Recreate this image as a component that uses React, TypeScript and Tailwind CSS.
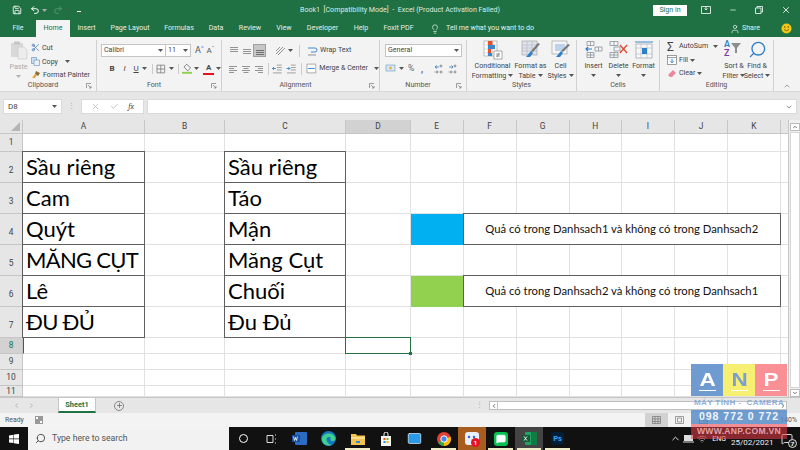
import React from 'react';
import { Save, Undo2, Redo2, Minus, X, Lightbulb, User, Search, Scissors, Check, ChevronUp, ChevronDown, ChevronLeft, ChevronRight, Plus, Mail, MessageSquare, Wifi } from 'lucide-react';

const ui = 'font-["Roboto",sans-serif]';
const calibri = 'font-["Lato","Noto_Sans",sans-serif]';

const Caret = ({ className = '' }: { className?: string }) => (
  <svg width="5" height="3" viewBox="0 0 5 3" className={`shrink-0 ${className}`}><path d="M0 0h5L2.5 3z" fill="#555" /></svg>
);

const Launcher = () => (
  <svg width="6" height="6" viewBox="0 0 6 6" className="shrink-0"><path d="M.5 5V.5H5M2 2l3 3M5 3v2H3" fill="none" stroke="#777" strokeWidth=".7" /></svg>
);

// horizontal text lines used by the alignment buttons
const Lines = ({ rows, color = '#8a8a8a' }: { rows: [number, number, number][]; color?: string }) => (
  <svg width="10" height="10" viewBox="0 0 10 10" className="shrink-0">
    {rows.map(([x, y, w], i) => <rect key={i} x={x} y={y} width={w} height=".9" fill={color} />)}
  </svg>
);

const Group = ({ label, width, launcher, children }: { label: string; width: string; launcher?: boolean; children: React.ReactNode }) => (
  <div className={`${width} flex flex-col shrink-0 border-r border-[#d0d0d0]`}>
    <div className="flex-1 min-h-0">{children}</div>
    <div className={`h-[11px] flex items-center relative text-[7.1px] text-[#555] justify-center ${launcher ? 'pr-[10px]' : ''}`}>
      {label}
      {launcher && <span className="absolute right-[4px] top-[3px]"><Launcher /></span>}
    </div>
  </div>
);

const TableIcon = ({ children }: { children?: React.ReactNode }) => (
  <svg width="20" height="20" viewBox="0 0 20 20" className="shrink-0">{children}</svg>
);

const CondIcon = () => (
  <TableIcon>
    <rect x="1" y="1" width="13" height="15" fill="#fff" stroke="#999" strokeWidth=".6" />
    <path d="M5 1v15M9.5 1v15M1 5h13M1 9h13M1 13h13" stroke="#bbb" strokeWidth=".5" />
    <rect x="5" y="1" width="4.5" height="4" fill="#e8502a" /><rect x="5" y="5" width="7" height="4" fill="#3d87c9" /><rect x="5" y="9" width="3" height="4" fill="#e8502a" /><rect x="5" y="13" width="4" height="3" fill="#3d87c9" />
    <rect x="11" y="11" width="8" height="8" fill="#fff" stroke="#777" strokeWidth=".6" />
    <path d="M13 14h4M13 16h4M16.2 13l-2.4 4" stroke="#555" strokeWidth=".6" />
  </TableIcon>
);
const FormatTableIcon = () => (
  <TableIcon>
    <rect x="1" y="1" width="15" height="14" fill="#dfe3ea" stroke="#999" strokeWidth=".6" />
    <path d="M6 1v14M11 1v14M1 5h15M1 8h15M1 11h15" stroke="#a7adb8" strokeWidth=".5" />
    <path d="M19 4l-7 8-2-1 7-8z" fill="#777" /><path d="M10 11l2 2-3 4H5z" fill="#2f7fc8" />
  </TableIcon>
);
const CellStyleIcon = () => (
  <TableIcon>
    <rect x="1" y="1" width="15" height="13" fill="#f6f6f6" stroke="#999" strokeWidth=".6" />
    <rect x="4" y="4" width="10" height="7" fill="#bcd3ea" />
    <path d="M19 5l-7 7-2-1 7-7z" fill="#777" /><path d="M10 11l2 2-3 4H5z" fill="#2f7fc8" />
  </TableIcon>
);
const InsertIcon = () => (
  <TableIcon>
    <path d="M3 1.5h7v4H3zM3 12.5h7v5H3zM6.5 12.5v5M3 15h7M6.5 1.5v4M11 7h7v4h-7zM14.5 7v4" fill="none" stroke="#7d8894" strokeWidth=".7" />
    <path d="M2 9h6M4 7l-2 2 2 2" fill="none" stroke="#2f7fc8" strokeWidth="1.2" />
  </TableIcon>
);
const DeleteIcon = () => (
  <TableIcon>
    <path d="M1 1.5h8v4H1zM5 1.5v4M1 12.5h8v5H1zM5 12.5v5M1 15h8M5 7h6v4H5z" fill="none" stroke="#7d8894" strokeWidth=".7" />
    <path d="M11 5l7 8M18 5l-7 8" stroke="#e0492c" strokeWidth="1.3" />
  </TableIcon>
);
const FormatIcon = () => (
  <TableIcon>
    <path d="M1 2h18" stroke="#2f7fc8" strokeWidth=".9" />
    <rect x="2" y="4" width="16" height="14" fill="#f8f8f8" stroke="#8b929b" strokeWidth=".6" />
    <path d="M7 4v14M13 4v14M2 8h16M2 14h16" stroke="#a8aeb6" strokeWidth=".5" />
    <rect x="8" y="8" width="5" height="6" fill="#2f7fc8" />
  </TableIcon>
);

const taskbarMark = 'after:content-[""] after:absolute after:bottom-0 after:left-[2px] after:right-[2px] after:h-[2px] after:bg-[#f2edc9]';

const TaskItem = ({ width, marked, bg = '', children }: { width: string; marked?: boolean; bg?: string; children: React.ReactNode }) => (
  <div className={`${width} ${bg} ${marked ? taskbarMark : ''} h-full relative flex items-center justify-center shrink-0`}>{children}</div>
);

const colHeads = ['A', 'B', 'C', 'D', 'E', 'F', 'G', 'H', 'I', 'J', 'K', ''];
const rowHeights = ['1', '2', '3', '4', '5', '6', '7', '8', '9', '10', '11'];
const listA: Record<string, string> = { '2': 'Sầu riêng', '3': 'Cam', '4': 'Quýt', '5': 'MĂNG CỤT', '6': 'Lê', '7': 'ĐU ĐỦ' };
const listC: Record<string, string> = { '2': 'Sầu riêng', '3': 'Táo', '4': 'Mận', '5': 'Măng Cụt', '6': 'Chuối', '7': 'Đu Đủ' };
const tabs = [
  ['File', 'w-[36px]'], ['Home', 'w-[34px]'], ['Insert', 'w-[33px]'], ['Page Layout', 'w-[54px]'], ['Formulas', 'w-[44px]'], ['Data', 'w-[30px]'],
  ['Review', 'w-[38px]'], ['View', 'w-[30px]'], ['Developer', 'w-[47px]'], ['Help', 'w-[30px]'], ['Foxit PDF', 'w-[45px]'],
];

const gridLine = 'border-r border-b border-[#e1e1e1]';
const boxLine = 'border border-[#5f5f5f] -mt-px -ml-px relative z-10';

const Sheet = () => (
  <div className="h-[277px] flex shrink-0 bg-white">
    <div className="w-[788px] grid grid-cols-[23px_122px_80px_121px_65px_52.5px_53px_53px_52.5px_53px_53px_53px_8px] grid-rows-[14px_18px_31px_31px_31px_31px_31px_31px_16px_16px_16px_11px] overflow-hidden">
      <div className="bg-[#e6e6e6] border-r border-b border-[#c6c6c6] flex items-end justify-end pr-[2px] pb-[2px]">
        <svg width="9" height="9" viewBox="0 0 9 9"><path d="M9 0v9H0z" fill="#b5b5b5" /></svg>
      </div>
      {colHeads.map((c, i) => (
        <div key={i} className={`${c === 'D' ? 'bg-[#d2d2d2]' : 'bg-[#e6e6e6]'} border-r border-b border-[#c6c6c6] flex items-center justify-center text-[8.4px] text-[#444] ${ui}`}>{c}</div>
      ))}
      {rowHeights.map((r) => {
        const inTable = !!listA[r];
        const legend = r === '4' || r === '6';
        const caps = r === '5' || r === '7';
        return (
          <React.Fragment key={r}>
            <div className={`${r === '8' ? 'bg-[#d2d2d2] text-[#217346]' : 'bg-[#e6e6e6] text-[#444]'} border-r border-b border-[#c6c6c6] flex items-center justify-center text-[8.4px] ${ui} ${inTable ? 'pt-[6px]' : ''}`}>{r}</div>
            <div className={`${inTable ? boxLine : gridLine} flex items-end pl-[3px] pb-[1px] text-[22px] leading-[28px] text-black whitespace-nowrap overflow-hidden ${calibri} ${caps ? 'tracking-[-0.7px]' : ''} ${r === '8' ? 'border-l-[1.5px] border-l-[#217346]' : ''}`}>{listA[r]}</div>
            <div className={gridLine} />
            <div className={`${inTable ? boxLine : gridLine} flex items-end pl-[3px] pb-[1px] text-[22px] leading-[28px] text-black whitespace-nowrap overflow-hidden ${calibri}`}>{listC[r]}</div>
            <div className={`${gridLine} relative`}>
              {r === '8' && (
                <div className="absolute -left-px -top-px -right-px -bottom-px border-[1.5px] border-[#217346] z-20">
                  <span className="absolute -right-[2px] -bottom-[2px] w-[3px] h-[3px] bg-[#217346]" />
                </div>
              )}
            </div>
            {legend ? (
              <>
                <div className={`${r === '4' ? 'bg-[#00b0f0]' : 'bg-[#92d050]'}`} />
                <div className={`col-span-6 ${boxLine} flex items-center justify-center text-[11.3px] text-[#111] ${calibri}`}>
                  {r === '4' ? 'Quả có trong Danhsach1 và không có trong Danhsach2' : 'Quả có trong Danhsach2 và không có trong Danhsach1'}
                </div>
              </>
            ) : (
              [0, 1, 2, 3, 4, 5, 6].map((i) => <div key={i} className={gridLine} />)
            )}
            <div className="border-b border-[#e1e1e1]" />
          </React.Fragment>
        );
      })}
    </div>
    <div className="w-[12px] bg-[#f0f0f0] border-l border-[#c6c6c6] flex flex-col items-center justify-between pt-[3px]">
      <div className="w-[10px] h-[8px] bg-white border border-[#bbb] flex items-center justify-center"><ChevronUp size={6} strokeWidth={3} color="#444" /></div>
      <div className="w-[10px] flex-1 my-[1px] bg-white border border-[#d5d5d5]" />
      <div className="w-[10px] h-[8px] bg-white border border-[#bbb] flex items-center justify-center"><ChevronDown size={6} strokeWidth={3} color="#444" /></div>
    </div>
  </div>
);

const App: React.FC = () => (
  <div className={`relative w-[800px] h-[450px] overflow-hidden flex flex-col bg-white ${ui}`}>
    {/* Title bar */}
    <div className="h-[20px] bg-[#1f7144] flex items-center text-white shrink-0 relative">
      <div className="flex items-center pl-[12px] gap-[1px] w-[90px]">
        <Save size={10} color="#fff" strokeWidth={2} />
        <Undo2 size={10} color="#fff" strokeWidth={2.4} className="ml-[7px]" />
        <Caret className="invert ml-[1px]" />
        <Redo2 size={10} color="#5d9c7b" strokeWidth={2} className="ml-[5px]" />
        <Caret className="opacity-40 ml-[1px]" />
        <span className="ml-[6px] w-[4px] h-[4px] border-b border-white" />
      </div>
      <div className="absolute left-[300px] top-0 h-full flex items-center text-[7.1px] text-[#dcebe3] whitespace-pre">Book1  [Compatibility Mode]  -  Excel (Product Activation Failed)</div>
      <div className="ml-auto flex items-center pr-[9px]">
        <div className="w-[34px] h-[11px] bg-white text-[#1f7144] text-[7.1px] flex items-center justify-center">Sign in</div>
        <svg width="10" height="8" viewBox="0 0 10 8" className="ml-[14px]"><path d="M.5.5h9v7h-9zM5 .5v3M3.5 2.5L5 4l1.5-1.5" fill="none" stroke="#fff" strokeWidth=".8" /></svg>
        <Minus size={8} color="#fff" className="ml-[18px]" />
        <svg width="8" height="8" viewBox="0 0 8 8" className="ml-[18px]"><path d="M.5 2h5.500v5.500H.5zM2 2V.5h5.500V6H6" fill="none" stroke="#fff" strokeWidth=".8" /></svg>
        <X size={10} color="#fff" className="ml-[18px]" />
      </div>
    </div>

    {/* Tabs */}
    <div className="h-[17px] bg-[#1f7144] flex items-stretch text-[7.1px] text-[#e3efe8] shrink-0">
      {tabs.map(([name, w]) => (
        <div key={name} className={`${w} flex items-center justify-center ${name === 'Home' ? 'bg-[#f3f3f3] text-[#1f7144]' : ''}`}>{name}</div>
      ))}
      <div className="flex items-center ml-[9px] gap-[6px]">
        <Lightbulb size={10} color="#fff" strokeWidth={1.5} />
        <span>Tell me what you want to do</span>
      </div>
      <div className="ml-auto flex items-center pr-[8px]">
        <User size={10} color="#fff" strokeWidth={1.5} />
        <span className="ml-[2px]">Share</span>
        <svg width="11" height="11" viewBox="0 0 11 11" className="ml-[21px]"><circle cx="5.5" cy="5.5" r="5" fill="#f2c811" /><circle cx="3.8" cy="4" r=".7" fill="#5a4700" /><circle cx="7.2" cy="4" r=".7" fill="#5a4700" /><path d="M3 6.5q2.5 2.5 5 0" fill="none" stroke="#5a4700" strokeWidth=".7" /></svg>
      </div>
    </div>

    {/* Ribbon */}
    <div className="h-[54px] bg-[#f3f3f3] flex pt-[3px] text-[7.1px] text-[#444] shrink-0">
      <Group label="Clipboard" width="w-[97px]" launcher>
        <div className="flex">
          <div className="w-[37px] flex flex-col items-center text-[#aaa]">
            <svg width="18" height="20" viewBox="0 0 18 20"><path d="M1 3h12v14H1z" fill="#d8d8d8" /><path d="M4 1.500h6v3H4z" fill="#c4c4c4" /><path d="M8 7h6l3 3v9H8z" fill="#ececec" stroke="#c8c8c8" strokeWidth=".6" /></svg>
            <span className="leading-[10px] mt-[2px]">Paste</span>
            <Caret className="opacity-40 mt-[3px]" />
          </div>
          <div className="flex flex-col pt-[1px] leading-[13.5px] -ml-[6px]">
            <div className="flex items-center gap-[2px] h-[13.5px]"><Scissors size={9} color="#3f78b5" /><span>Cut</span></div>
            <div className="flex items-center gap-[2px] h-[13.5px]">
              <svg width="9" height="9" viewBox="0 0 9 9"><path d="M.5.5h5v6h-5z" fill="#cfe0f2" stroke="#5f8dbd" strokeWidth=".6" /><path d="M3 3h5.500v5.500H3z" fill="#e9f1fa" stroke="#5f8dbd" strokeWidth=".6" /></svg>
              <span>Copy</span><Caret className="ml-[5px]" />
            </div>
            <div className="flex items-center gap-[2px] h-[13.5px] whitespace-nowrap">
              <svg width="10" height="9" viewBox="0 0 10 9"><path d="M5 1l4 2-2 3-3-2z" fill="#8a6d3b" /><path d="M4 4L1 8h3l2-3z" fill="#e8a33c" /></svg>
              <span>Format Painter</span>
            </div>
          </div>
        </div>
      </Group>

      <Group label="Font" width="w-[125px]" launcher>
        <div className="pl-[4px] pt-[4px] flex flex-col gap-[5px]">
          <div className="flex items-center h-[13px]">
            <div className="w-[65px] h-full bg-white border border-[#c4c4c4] flex items-center px-[2px] justify-between"><span>Calibri</span><Caret /></div>
            <div className="w-[25px] h-full bg-white border border-l-0 border-[#c4c4c4] flex items-center px-[2px] justify-between"><span>11</span><Caret /></div>
            <span className="ml-[4px] text-[9px] text-[#555] leading-none">A<sup className="text-[6px] text-[#2f7fc8]">^</sup></span>
            <span className="ml-[3px] text-[8px] text-[#555] leading-none">A<sup className="text-[6px] text-[#2f7fc8]">ˇ</sup></span>
          </div>
          <div className="flex items-center h-[13px] text-[8px] text-[#444]">
            <span className="w-[5px]" />
            <span className="w-[13px] text-center font-bold">B</span>
            <span className="w-[13px] text-center italic">I</span>
            <span className="w-[11px] text-center underline">U</span>
            <Caret className="ml-[1px]" />
            <span className="w-px h-[10px] bg-[#ccc] ml-[5px]" />
            <svg width="10" height="10" viewBox="0 0 10 10" className="ml-[3px]"><path d="M1 1h8v8H1zM5 1v8M1 5h8" fill="none" stroke="#777" strokeWidth=".8" /></svg>
            <Caret className="ml-[3px]" />
            <span className="w-px h-[10px] bg-[#ccc] ml-[4px]" />
            <svg width="11" height="11" viewBox="0 0 11 11" className="ml-[3px]"><path d="M5 1l4 4-3 3-4-4z" fill="none" stroke="#666" strokeWidth=".8" /><rect x="0" y="9" width="11" height="2" fill="#92d050" /></svg>
            <Caret className="ml-[2px]" />
            <span className="relative w-[11px] text-center ml-[4px] leading-[10px] font-semibold border-b-2 border-[#e8121c]">A</span>
            <Caret className="ml-[2px]" />
          </div>
        </div>
      </Group>

      <Group label="Alignment" width="w-[158px]" launcher>
        <div className="pl-[5px] pt-[4px] flex flex-col gap-[5px]">
          <div className="flex items-center h-[13px]">
            <span className="w-[13px] flex justify-center"><Lines rows={[[1, 1, 8], [1, 3, 8], [1, 5, 8]]} /></span>
            <span className="w-[13px] flex justify-center"><Lines rows={[[1, 3, 8], [1, 5, 8], [1, 7, 8]]} /></span>
            <span className="w-[13px] h-[13px] bg-[#c6c6c6] border border-[#a0a0a0] flex justify-center items-center"><Lines rows={[[1, 4, 8], [1, 6, 8], [1, 8, 8]]} color="#666" /></span>
            <svg width="11" height="11" viewBox="0 0 11 11" className="ml-[9px]"><path d="M1 9l7-7M3 10l7-7M1 6l4-4" stroke="#777" strokeWidth=".8" /></svg>
            <Caret className="ml-[2px]" />
            <span className="w-px h-[12px] bg-[#ccc] ml-[6px]" />
            <svg width="11" height="11" viewBox="0 0 11 11" className="ml-[7px]"><path d="M1 3h7a2 2 0 010 4H4" fill="none" stroke="#2f7fc8" strokeWidth=".9" /><path d="M1 10h8" stroke="#888" strokeWidth=".9" /></svg>
            <span className="ml-[2px] whitespace-nowrap">Wrap Text</span>
          </div>
          <div className="flex items-center h-[13px]">
            <span className="w-[13px] flex justify-center"><Lines rows={[[1, 2, 8], [1, 4, 5], [1, 6, 8], [1, 8, 5]]} /></span>
            <span className="w-[13px] flex justify-center"><Lines rows={[[1, 2, 8], [2.5, 4, 5], [1, 6, 8], [2.5, 8, 5]]} /></span>
            <span className="w-[13px] flex justify-center"><Lines rows={[[1, 2, 8], [4, 4, 5], [1, 6, 8], [4, 8, 5]]} /></span>
            <span className="w-px h-[12px] bg-[#ccc] ml-[3px]" />
            <svg width="11" height="10" viewBox="0 0 11 10" className="ml-[3px]"><path d="M5 1h5M5 3.500h5M5 6h5M1 9h9" stroke="#888" strokeWidth=".8" /><path d="M4 4.500H.5M2 3L.5 4.500 2 6" fill="none" stroke="#2f7fc8" strokeWidth=".9" /></svg>
            <svg width="11" height="10" viewBox="0 0 11 10" className="ml-[3px]"><path d="M5 1h5M5 3.500h5M5 6h5M1 9h9" stroke="#888" strokeWidth=".8" /><path d="M.5 4.500H4M2.500 3L4 4.500 2.500 6" fill="none" stroke="#2f7fc8" strokeWidth=".9" /></svg>
            <span className="w-px h-[12px] bg-[#ccc] ml-[4px]" />
            <svg width="11" height="11" viewBox="0 0 11 11" className="ml-[5px]"><path d="M1 1h9v9H1z" fill="#fff" stroke="#888" strokeWidth=".7" /><path d="M2 5.500h7" stroke="#2f7fc8" strokeWidth=".9" /></svg>
            <span className="ml-[2px] whitespace-nowrap">Merge &amp; Center</span>
            <Caret className="ml-[6px]" />
          </div>
        </div>
      </Group>

      <Group label="Number" width="w-[87px]" launcher>
        <div className="pl-[5px] pt-[4px] flex flex-col gap-[5px]">
          <div className="w-[77px] h-[13px] bg-white border border-[#c4c4c4] flex items-center justify-between px-[2px]"><span>General</span><Caret /></div>
          <div className="flex items-center h-[13px] text-[#666]">
            <svg width="11" height="10" viewBox="0 0 11 10"><rect x="1" y="1" width="9" height="6" fill="#d9e7f4" stroke="#6d9ac5" strokeWidth=".6" /><circle cx="5.500" cy="4" r="1.500" fill="#e2b93b" /></svg>
            <Caret className="ml-[3px]" />
            <span className="ml-[4px] text-[8.5px] w-[9px]">%</span>
            <span className="ml-[4px] text-[9px] font-bold leading-[8px] w-[5px]">,</span>
            <svg width="11" height="10" viewBox="0 0 11 10" className="ml-[7px]"><path d="M1 8h.6M3 8a1 1 0 102 0 1 1 0 10-2 0M7 8a1 1 0 102 0 1 1 0 10-2 0M7 2a1 1 0 102 0 1 1 0 10-2 0" fill="none" stroke="#666" strokeWidth=".7" /><path d="M2 3h4M4 1.500L2 3l2 1.500" fill="none" stroke="#2f7fc8" strokeWidth=".8" /></svg>
            <svg width="11" height="10" viewBox="0 0 11 10" className="ml-[3px]"><path d="M1 8h.6M3 8a1 1 0 102 0 1 1 0 10-2 0M7 8a1 1 0 102 0 1 1 0 10-2 0M7 2a1 1 0 102 0 1 1 0 10-2 0" fill="none" stroke="#666" strokeWidth=".7" /><path d="M2 3h4M4.500 1.500L6 3 4.500 4.500" fill="none" stroke="#2f7fc8" strokeWidth=".8" /></svg>
          </div>
        </div>
      </Group>

      <Group label="Styles" width="w-[110px]">
        <div className="flex pl-[4px] text-center leading-[9.5px]">
          {[
            { w: 'w-[43px]', icon: <CondIcon />, a: 'Conditional', b: 'Formatting' },
            { w: 'w-[33px]', icon: <FormatTableIcon />, a: 'Format as', b: 'Table' },
            { w: 'w-[27px]', icon: <CellStyleIcon />, a: 'Cell', b: 'Styles' },
          ].map((s) => (
            <div key={s.a} className={`${s.w} flex flex-col items-center whitespace-nowrap`}>
              {s.icon}
              <span className="mt-[1px]">{s.a}</span>
              <span className="flex items-center gap-[2px]">{s.b}<Caret /></span>
            </div>
          ))}
        </div>
      </Group>

      <Group label="Cells" width="w-[83px]">
        <div className="flex pl-[4px] text-center leading-[9.5px]">
          {[
            { n: 'Insert', icon: <InsertIcon /> },
            { n: 'Delete', icon: <DeleteIcon /> },
            { n: 'Format', icon: <FormatIcon /> },
          ].map((s) => (
            <div key={s.n} className="w-[25px] flex flex-col items-center">
              {s.icon}
              <span className="mt-[1px]">{s.n}</span>
              <Caret className="mt-[3px]" />
            </div>
          ))}
        </div>
      </Group>

      <Group label="Editing" width="w-[114px]">
        <div className="flex pl-[7px]">
          <div className="flex flex-col w-[55px]">
            <div className="flex items-center h-[13.5px]"><span className="text-[12px] leading-none w-[11px] text-[#444]">Σ</span><span className="ml-[1px]">AutoSum</span><Caret className="ml-[5px]" /></div>
            <div className="flex items-center h-[13.5px]"><svg width="10" height="10" viewBox="0 0 10 10"><rect x=".5" y=".5" width="9" height="9" fill="#fff" stroke="#777" strokeWidth=".7" /><path d="M.5 2.500h9" stroke="#777" strokeWidth=".7" /><path d="M5 3.500v4M3.300 6L5 7.800 6.700 6" fill="none" stroke="#2f7fc8" strokeWidth=".9" /></svg><span className="ml-[2px]">Fill</span><Caret className="ml-[2px]" /></div>
            <div className="flex items-center h-[13.5px]"><svg width="10" height="9" viewBox="0 0 10 9"><path d="M1 6l5-5 3 3-4 4H3z" fill="#e88a9c" /></svg><span className="ml-[2px]">Clear</span><Caret className="ml-[2px]" /></div>
          </div>
          <div className="flex text-center leading-[9.5px]">
            <div className="w-[24px] flex flex-col items-center whitespace-nowrap">
              <div className="h-[20px] w-[20px] flex items-start relative">
                <span className="text-[9px] leading-[9px] font-semibold text-[#2f7fc8]">A</span>
                <span className="absolute left-0 top-[9px] text-[9px] leading-[9px] font-semibold text-[#7a3aa8]">Z</span>
                <svg width="10" height="10" viewBox="0 0 10 10" className="ml-[1px] mt-[3px]"><path d="M0 0h10L6 5v5H4V5z" fill="#8d8d8d" /></svg>
              </div>
              <span className="mt-[1px]">Sort &amp;</span>
              <span className="flex items-center gap-[2px]">Filter<Caret /></span>
            </div>
            <div className="w-[22px] flex flex-col items-center whitespace-nowrap">
              <Search size={19} color="#2f7fc8" strokeWidth={1.7} className="-scale-x-100" />
              <span className="mt-[2px]">Find &amp;</span>
              <span className="flex items-center gap-[2px]">Select<Caret /></span>
            </div>
          </div>
        </div>
      </Group>

      <div className="flex-1 flex items-end justify-center pb-[1px]"><ChevronUp size={8} color="#777" /></div>
    </div>

    {/* Formula bar */}
    <div className="h-[29px] bg-[#e6e6e6] pt-[7px] shrink-0 border-t border-[#d8d8d8]">
      <div className="h-[15px] flex items-stretch pl-[3px] pr-[3px] text-[8px] text-[#444]">
        <div className="w-[59px] bg-white flex items-center justify-between px-[4px] border border-[#dadada]"><span>D8</span><Caret /></div>
        <div className="w-[19px] flex items-center justify-center text-[#aaa] text-[7px] leading-none">⋮</div>
        <div className="w-[63px] bg-white border border-[#dadada] flex items-center justify-around px-[4px]">
          <X size={9} color="#b5b5b5" /><Check size={9} color="#b5b5b5" /><span className="italic font-serif text-[#555]">fx</span>
        </div>
        <div className="flex-1 ml-[3px] bg-white border border-[#dadada] flex items-center justify-end pr-[3px]"><ChevronDown size={8} color="#555" /></div>
      </div>
    </div>

    <Sheet />

    {/* Sheet tabs */}
    <div className="h-[16px] bg-[#e6e6e6] flex items-stretch border-t border-[#c6c6c6] shrink-0">
      <div className="flex items-center pl-[13px] gap-[8px] w-[58px]"><ChevronLeft size={7} color="#aaa" strokeWidth={3} /><ChevronRight size={7} color="#aaa" strokeWidth={3} /></div>
      <div className="w-[38px] bg-white border-x border-[#c6c6c6] border-b-2 border-b-[#217346] text-[#217346] text-[7.4px] font-bold flex items-center justify-center">Sheet1</div>
      <div className="ml-[18px] flex items-center"><span className="w-[10px] h-[10px] rounded-full border border-[#888] flex items-center justify-center"><Plus size={7} color="#666" strokeWidth={2.5} /></span></div>
      <div className="ml-auto flex items-center pr-[13px]">
        <span className="text-[#aaa] text-[7px] mr-[6px]">⋮</span>
        <div className="w-[298px] h-[9px] bg-white border border-[#c0c0c0] flex items-center justify-between">
          <span className="w-[8px] h-full border-r border-[#c0c0c0] flex items-center justify-center"><ChevronLeft size={6} color="#444" strokeWidth={3} /></span>
          <ChevronRight size={6} color="#444" strokeWidth={3} />
        </div>
      </div>
    </div>

    {/* Status bar */}
    <div className="h-[14px] bg-[#f3f3f3] flex items-center text-[6.9px] text-[#555] shrink-0">
      <span className="pl-[5px]">Ready</span>
      <svg width="8" height="8" viewBox="0 0 8 8" className="ml-[11px]"><rect width="8" height="8" fill="#999" /><rect x="1" y="1" width="2" height="2" fill="#fff" /><rect x="5" y="5" width="2" height="2" fill="#fff" /></svg>
      <div className="ml-auto flex items-stretch h-full pr-[3px]">
        <div className="w-[23px] bg-[#d2d2d2] flex items-center justify-center"><svg width="9" height="8" viewBox="0 0 9 8"><path d="M.5.5h8v7h-8zM3 .5v7M6 .5v7M.5 3h8M.5 5.500h8" fill="none" stroke="#666" strokeWidth=".6" /></svg></div>
        <div className="w-[23px] flex items-center justify-center"><svg width="9" height="8" viewBox="0 0 9 8"><path d="M.5.5h8v7h-8zM2.500 2h4v4h-4z" fill="none" stroke="#666" strokeWidth=".6" /></svg></div>
        <div className="w-[24px] flex items-center justify-center"><svg width="9" height="8" viewBox="0 0 9 8"><path d="M.5.5h8v7h-8zM3 .5v4.500h5.500" fill="none" stroke="#666" strokeWidth=".7" /></svg></div>
        <div className="w-[82px] flex items-center justify-end">140%</div>
      </div>
    </div>

    {/* Windows taskbar */}
    <div className="h-[23px] bg-[#111] flex items-stretch shrink-0 relative">
      <div className="w-[28px] flex items-center justify-center">
        <svg width="10" height="10" viewBox="0 0 10 10"><path d="M0 1.400l4.500-.7v3.900H0zM5 .6l5-.7v4.700H5zM0 5.200h4.500v3.900L0 8.500zM5 5.200h5v4.800l-5-.7z" fill="#fff" /></svg>
      </div>
      <div className="w-[201px] bg-[#f2f2f2] flex items-center pl-[7px] gap-[6px] text-[8.7px] text-[#555]">
        <Search size={11} color="#444" className="-scale-x-100" />
        <span>Type here to search</span>
      </div>
      <TaskItem width="w-[28px]"><span className="w-[9px] h-[9px] rounded-full border-[1.5px] border-white" /></TaskItem>
      <TaskItem width="w-[28px]"><svg width="11" height="10" viewBox="0 0 11 10"><path d="M1 1.500h6v7H1zM9 1h1M9 5h1M9 9h1" fill="none" stroke="#ddd" strokeWidth="1" /></svg></TaskItem>
      <TaskItem width="w-[29px]"><svg width="15" height="13" viewBox="0 0 15 13"><rect x="3" y="0" width="12" height="13" rx="1" fill="#2b6bc4" /><rect x="0" y="3" width="8" height="7" fill="#1a4f9f" /><path d="M1.500 4.500l1 4 1-3 1 3 1-4" fill="none" stroke="#fff" strokeWidth=".8" /></svg></TaskItem>
      <TaskItem width="w-[29px]"><svg width="15" height="15" viewBox="0 0 15 15"><circle cx="7.500" cy="7.500" r="7.500" fill="#1577c2" /><path d="M1 7C2 2 12 0 14.500 7c.5 3-4 4-5 2 0-2 1-3-2-3-3 0-3 6 3 8C5 16 0 12 1 7z" fill="#3fd08f" /></svg></TaskItem>
      <TaskItem width="w-[29px]" marked><svg width="14" height="12" viewBox="0 0 14 12"><path d="M0 1h5l1 1.500h8V12H0z" fill="#f3c44c" /><rect y="4" width="14" height="2" fill="#f7dc8c" /><rect x="5" y="8" width="4" height="2" fill="#2f8bd8" /></svg></TaskItem>
      <TaskItem width="w-[28px]"><svg width="12" height="14" viewBox="0 0 12 14"><path d="M1 4h10v10H1z" fill="#f4f4f4" /><path d="M4 4V2a2 2 0 014 0v2" fill="none" stroke="#eee" /><rect x="3.500" y="6" width="2" height="2" fill="#e8502a" /><rect x="6.500" y="6" width="2" height="2" fill="#7fba00" /><rect x="3.500" y="9" width="2" height="2" fill="#1f8fe0" /><rect x="6.500" y="9" width="2" height="2" fill="#f2b900" /></svg></TaskItem>
      <TaskItem width="w-[29px]"><Mail size={15} color="#e8f4fc" fill="#2b9ae6" strokeWidth={1.1} /></TaskItem>
      <TaskItem width="w-[29px]" marked><svg width="14" height="14" viewBox="0 0 14 14"><circle cx="7" cy="7" r="7" fill="#e34133" /><path d="M7 7L1 10.500A7 7 0 0 0 7 14z" fill="#34a853" /><path d="M7 7l6.600-2.300A7 7 0 0 1 7 14z" fill="#fbbc05" /><circle cx="7" cy="7" r="3.200" fill="#4285f4" stroke="#fff" /></svg></TaskItem>
      <TaskItem width="w-[28px]" bg="bg-[#a85c1e]">
        <span className="relative">
          <svg width="14" height="13" viewBox="0 0 14 13"><path d="M3 0h8a3 3 0 013 3v7a3 3 0 01-3 3H3a3 3 0 01-3-3V3a3 3 0 013-3z" fill="#e7eefc" /><circle cx="4" cy="5" r="1.200" fill="#2b63d9" /><circle cx="9" cy="5" r="1.200" fill="#2b63d9" /></svg>
          <span className="absolute left-[6px] top-[6px] w-[9px] h-[9px] rounded-full bg-[#e81123] text-white text-[6px] leading-[9px] text-center font-bold">1</span>
        </span>
      </TaskItem>
      <TaskItem width="w-[29px]" marked><span className="w-[14px] h-[14px] rounded-[3px] bg-[#06c152] flex items-center justify-center"><MessageSquare size={10} color="#fff" fill="#fff" /></span></TaskItem>
      <TaskItem width="w-[28px]" marked bg="bg-[#444]"><svg width="15" height="13" viewBox="0 0 15 13"><rect x="3" y="0" width="12" height="13" rx="1" fill="#21a366" /><rect x="9" y="0" width="6" height="13" fill="#107c41" /><rect x="0" y="3" width="8" height="7" fill="#185c37" /><path d="M2 4.500l3 4M5 4.500l-3 4" stroke="#fff" strokeWidth=".9" /></svg></TaskItem>
      <TaskItem width="w-[29px]" marked><span className="w-[13px] h-[13px] bg-[#001e36] rounded-[2px] text-[#31a8ff] text-[7.5px] font-bold flex items-center justify-center">Ps</span></TaskItem>
      <div className="ml-auto flex items-center pr-[7px] text-white">
        <ChevronUp size={11} color="#eee" />
        <svg width="11" height="9" viewBox="0 0 11 9" className="ml-[2px]"><rect x="1" y="1" width="9" height="6" fill="#ddd" /><path d="M0 8h11" stroke="#ddd" /></svg>
        <Wifi size={10} color="#aaa" className="ml-[3px]" />
        <span className="text-[7px] ml-[5px] pt-[2px]">ENG</span>
        <span className="text-[8px] ml-[5px] w-[40px] pt-[9px] text-[#eee]">25/02/2021</span>
        <span className="relative ml-[10px]">
          <MessageSquare size={12} color="#ddd" />
          <span className="absolute -right-[4px] -bottom-[3px] w-[9px] h-[9px] rounded-full bg-[#222] border border-[#ddd] text-[6px] leading-[7px] text-center font-bold">7</span>
        </span>
      </div>
    </div>

    {/* ANP watermark, sits over the bottom right corner */}
    <div className="absolute left-[691px] top-[364px] w-[96px] h-[75px] flex flex-col font-['Liberation_Sans',sans-serif] font-bold">
      <div className="h-[32px] flex text-white text-[18px]">
        <div className="w-[32px] bg-[#6f9bd1] flex flex-col items-center justify-center leading-[20px]"><span className="scale-x-125">A</span><span className="w-[17px] h-px bg-white" /></div>
        <div className="w-[32px] bg-[#f7ef72] flex flex-col items-center justify-center leading-[20px] text-[#7ba0d0]"><span className="scale-x-125">N</span><span className="w-[17px] h-px bg-white" /></div>
        <div className="w-[32px] bg-[#fa9096] flex flex-col items-center justify-center leading-[20px]"><span className="scale-x-125">P</span><span className="w-[17px] h-px bg-white" /></div>
      </div>
      <div className="h-[14px] flex items-center justify-center text-[#7fa5d6]/90 text-[8px] whitespace-pre tracking-[.4px]">MÁY TÍNH -  CAMERA</div>
      <div className="h-[14px] bg-[#4f86c6]/80 flex items-center justify-center text-white/90 text-[10.5px] tracking-[1px] whitespace-nowrap">098 772 0 772</div>
      <div className="h-[15px] bg-[#ef3d4a]/55 flex items-center justify-center text-[#f7c5c8]/80 text-[8.6px] tracking-[.3px] whitespace-nowrap">WWW.ANP.COM.VN</div>
    </div>
  </div>
);

export default App;
